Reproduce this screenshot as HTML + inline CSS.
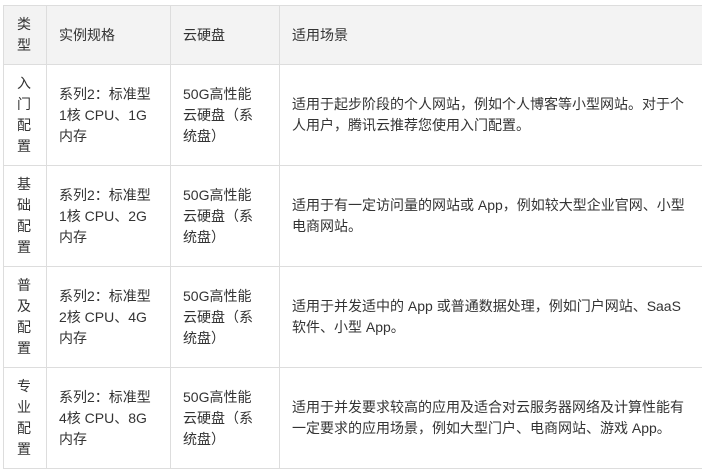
<!DOCTYPE html>
<html><head><meta charset="utf-8"><style>
body{margin:0;background:#fff;width:702px;height:474px;overflow:hidden;font-family:"Liberation Sans","Noto Sans CJK SC",sans-serif;font-size:14px;color:#333;}
table{position:absolute;left:3px;top:5px;border-collapse:collapse;width:710px;table-layout:fixed;}
td,th{border:1px solid #ddd;padding:0 12px;line-height:21px;text-align:left;font-weight:normal;vertical-align:middle;white-space:nowrap;}
th{background:#f3f3f3;height:58px;}
tr.r td{height:100px;}
col.a{width:43px}col.b{width:124px}col.c{width:109px}
td.t{padding:0 13px;}
</style></head><body>
<table>
<colgroup><col class="a"><col class="b"><col class="c"><col></colgroup>
<tr><th class="t" style="padding:0 13px">类<br>型</th><th>实例规格</th><th>云硬盘</th><th>适用场景</th></tr>
<tr class="r"><td class="t">入<br>门<br>配<br>置</td><td>系列2：标准型<br>1核 CPU、1G<br>内存</td><td>50G高性能<br>云硬盘（系<br>统盘）</td><td>适用于起步阶段的个人网站，例如个人博客等小型网站。对于个<br>人用户，腾讯云推荐您使用入门配置。</td></tr>
<tr class="r"><td class="t">基<br>础<br>配<br>置</td><td>系列2：标准型<br>1核 CPU、2G<br>内存</td><td>50G高性能<br>云硬盘（系<br>统盘）</td><td>适用于有一定访问量的网站或 App，例如较大型企业官网、小型<br>电商网站。</td></tr>
<tr class="r"><td class="t">普<br>及<br>配<br>置</td><td>系列2：标准型<br>2核 CPU、4G<br>内存</td><td>50G高性能<br>云硬盘（系<br>统盘）</td><td>适用于并发适中的 App 或普通数据处理，例如门户网站、SaaS<br>软件、小型 App。</td></tr>
<tr class="r"><td class="t">专<br>业<br>配<br>置</td><td>系列2：标准型<br>4核 CPU、8G<br>内存</td><td>50G高性能<br>云硬盘（系<br>统盘）</td><td>适用于并发要求较高的应用及适合对云服务器网络及计算性能有<br>一定要求的应用场景，例如大型门户、电商网站、游戏 App。</td></tr>
</table>
</body></html>
